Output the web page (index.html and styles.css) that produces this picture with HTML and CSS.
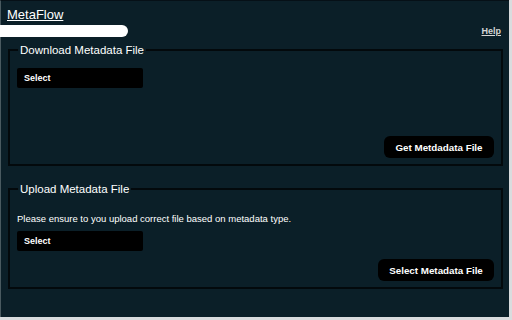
FILE: index.html
```html
<!DOCTYPE html>
<html lang="en">
<head>
    <meta charset="UTF-8">
    <title>MetaFlow</title>
    <link rel="stylesheet" href="styles.css">
</head>
<body>
    <div class="page">
        <div class="header">
            <a class="brand" href="#">MetaFlow</a>
        </div>
        <div class="topbar">
            <div class="search"></div>
            <a class="help" href="#">Help</a>
        </div>

        <fieldset class="panel download">
            <legend>Download Metadata File</legend>
            <div class="select">Select</div>
            <div class="actions">
                <button class="button">Get Metdadata File</button>
            </div>
        </fieldset>

        <fieldset class="panel upload">
            <legend>Upload Metadata File</legend>
            <p class="note">Please ensure to you upload correct file based on metadata type.</p>
            <div class="select">Select</div>
            <div class="actions">
                <button class="button">Select Metadata File</button>
            </div>
        </fieldset>
    </div>
</body>
</html>
```

FILE: styles.css
```css
html, body {
    margin: 0;
    padding: 0;
    background-color: #d9dcde;
}
body {
    font-family: "Liberation Sans", Arial, sans-serif;
    color: #fff;
}
.page {
    width: 509px;
    height: 317px;
    background-color: #0b1f28;
    border-left: 1px solid #4a5a60;
    border-top: 1px solid #061017;
    box-sizing: border-box;
    padding-top: 4px;
}
.header {
    padding-left: 6px;
    height: 18px;
}
.brand {
    color: #fff;
    font-size: 13px;
    text-decoration: underline;
}
.topbar {
    display: flex;
    align-items: center;
    justify-content: space-between;
    height: 14px;
    margin-top: 1px;
    padding-right: 8px;
}
.search {
    width: 128px;
    height: 12px;
    margin-left: -1px;
    background: #fff;
    border-radius: 0 6px 6px 0;
}
.help {
    color: #d6d6d6;
    font-size: 9px;
    font-weight: bold;
    text-decoration: underline;
}
.panel {
    margin: 6px 6px 0 7px;
    padding: 8px 7px 6px 7px;
    border: 2px solid #03090c;
    min-width: 0;
}
.panel legend {
    font-size: 11.5px;
    padding: 0 2px;
    margin-left: 1px;
    color: #fff;
}
.download {
    height: 122px;
    padding-top: 12px;
    box-sizing: border-box;
    display: flex;
    flex-direction: column;
}
.upload {
    margin-top: 17px;
}
.select {
    width: 126px;
    height: 20px;
    background: #000;
    font-size: 9px;
    font-weight: bold;
    line-height: 20px;
    padding-left: 7px;
    box-sizing: border-box;
    border-radius: 2px;
}
.download .actions {
    margin-top: auto;
}
.actions {
    display: flex;
    justify-content: flex-end;
}
.button {
    background: #000;
    color: #fff;
    border: none;
    border-radius: 6px;
    font-family: "Liberation Sans", Arial, sans-serif;
    font-size: 9.8px;
    font-weight: bold;
    height: 22px;
    padding: 0 8px;
}
.download .button {
    width: 110px;
}
.upload .button {
    width: 116px;
    margin-top: 8px;
}
.note {
    font-size: 9.5px;
    margin: 10px 0 7px 0;
}
```
